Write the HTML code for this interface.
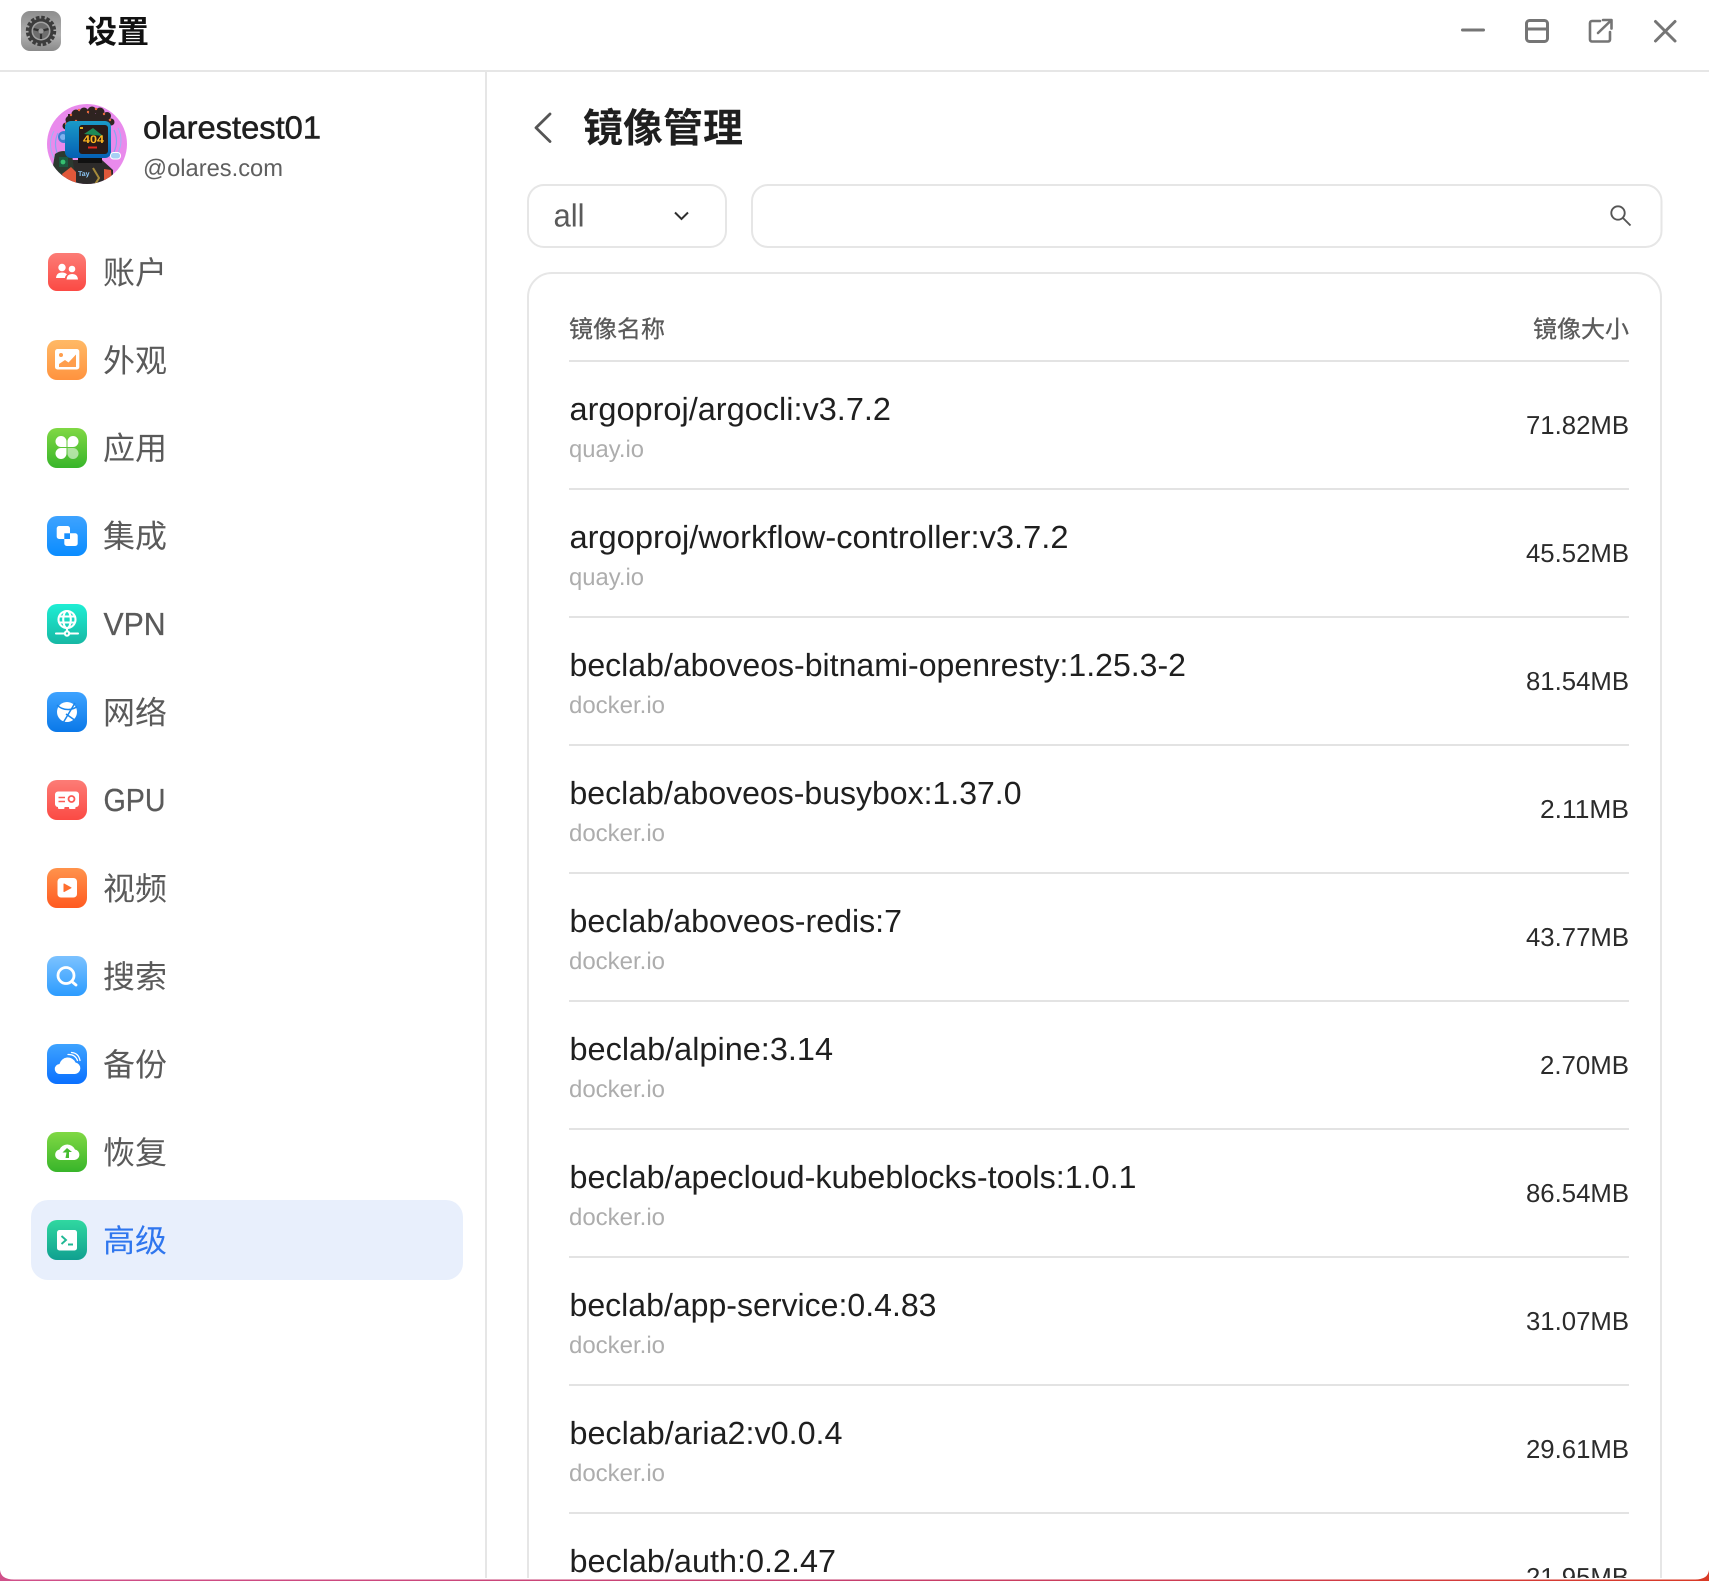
<!DOCTYPE html>
<html lang="zh">
<head>
<meta charset="utf-8">
<title>设置</title>
<style>
html,body{margin:0;padding:0;background:#fff;width:1709px;height:1581px;overflow:hidden}
svg{display:block}
text{font-family:"Liberation Sans","Noto Sans CJK SC",sans-serif;text-rendering:geometricPrecision}
.n{font-size:32px;fill:#1f1f1f}
.s{font-size:24px;fill:#adadad}
.z{font-size:26px;fill:#2b2b2b;text-anchor:end}
.l{font-size:32px;fill:#5a5a5a}
.h{font-size:24px;fill:#5a5a5a;stroke:#5a5a5a;stroke-width:.3}
.w{fill:none;stroke:#757575;stroke-width:3;stroke-linecap:round;stroke-linejoin:round}
</style>
</head>
<body>
<svg width="1709" height="1581" viewBox="0 0 1709 1581" xmlns="http://www.w3.org/2000/svg">
<defs>
<linearGradient id="gRed" x1="0" y1="0" x2="0" y2="1"><stop offset="0" stop-color="#fc7c76"/><stop offset="1" stop-color="#fb4a44"/></linearGradient>
<linearGradient id="gOrg" x1="0" y1="0" x2="0" y2="1"><stop offset="0" stop-color="#ffb966"/><stop offset="1" stop-color="#ff933f"/></linearGradient>
<linearGradient id="gGrn" x1="0" y1="0" x2="0" y2="1"><stop offset="0" stop-color="#80d844"/><stop offset="1" stop-color="#38b52a"/></linearGradient>
<linearGradient id="gBlu" x1="0" y1="0" x2="0" y2="1"><stop offset="0" stop-color="#3ea3ff"/><stop offset="1" stop-color="#0a8cff"/></linearGradient>
<linearGradient id="gTea" x1="0" y1="0" x2="0" y2="1"><stop offset="0" stop-color="#1eeed4"/><stop offset="1" stop-color="#17b8a4"/></linearGradient>
<linearGradient id="gNet" x1="0" y1="0" x2="0" y2="1"><stop offset="0" stop-color="#3ea3ff"/><stop offset="1" stop-color="#0a78e8"/></linearGradient>
<linearGradient id="gVid" x1="0" y1="0" x2="0" y2="1"><stop offset="0" stop-color="#ff934c"/><stop offset="1" stop-color="#ff5a20"/></linearGradient>
<linearGradient id="gSea" x1="0" y1="0" x2="0" y2="1"><stop offset="0" stop-color="#7cc2ff"/><stop offset="1" stop-color="#2c9cff"/></linearGradient>
<linearGradient id="gBak" x1="0" y1="0" x2="0" y2="1"><stop offset="0" stop-color="#3ea3ff"/><stop offset="1" stop-color="#0a70ff"/></linearGradient>
<linearGradient id="gAdv" x1="0" y1="0" x2="0" y2="1"><stop offset="0" stop-color="#30d8a0"/><stop offset="1" stop-color="#10a090"/></linearGradient>
<linearGradient id="gApp" x1="0" y1="0" x2="0" y2="1"><stop offset="0" stop-color="#8e8e8e"/><stop offset=".6" stop-color="#b0b0b0"/><stop offset="1" stop-color="#8a8a8a"/></linearGradient>
<linearGradient id="gHead" x1="0" y1="0" x2="0" y2="1"><stop offset="0" stop-color="#1a9ac8"/><stop offset="1" stop-color="#0560b4"/></linearGradient>
<linearGradient id="gBand" x1="0" y1="0" x2="1" y2="0"><stop offset="0" stop-color="#d0508a"/><stop offset=".5" stop-color="#c63f6e"/><stop offset="1" stop-color="#d93a26"/></linearGradient>
<clipPath id="cAv"><circle cx="87" cy="144" r="40"/></clipPath>
</defs>

<rect width="1709" height="1581" fill="#fff"/>

<!-- title bar -->
<rect x="21" y="11" width="40" height="40" rx="9" fill="url(#gApp)"/>
<circle cx="41" cy="31" r="13.5" fill="none" stroke="#3c3c3c" stroke-width="3.4" stroke-dasharray="3.500 1.800"/>
<circle cx="41" cy="31" r="12.500" fill="#3c3c3c"/>
<circle cx="41" cy="31" r="9.500" fill="#a2a2a2"/>
<circle cx="41" cy="31" r="8" fill="#6e6e6e"/>
<path d="M41 31 L33.500 29 M41 31 L48.500 29 M41 31 L41 39" stroke="#323232" stroke-width="2.200"/>
<circle cx="41" cy="31" r="2.600" fill="#9c9c9c"/>
<text x="85" y="43" font-size="32" font-weight="700" fill="#111">设置</text>
<path class="w" d="M1462.5 30 H1483.5"/>
<rect class="w" x="1526.5" y="20.5" width="21" height="21" rx="3"/>
<path class="w" d="M1527 29 H1547"/>
<path class="w" style="stroke-width:2.6" d="M1600 21 H1592 a2 2 0 0 0 -2 2 V39.500 a2 2 0 0 0 2 2 H1608 a2 2 0 0 0 2 -2 V32 M1598 33 L1611 20.500 M1603 20 H1611.500 V28.500"/>
<path class="w" d="M1655.500 21.500 L1675 41 M1675 21.500 L1655.500 41"/>
<rect x="0" y="70" width="1709" height="2" fill="#e6e6e6"/>
<rect x="485" y="72" width="2" height="1508" fill="#e6e6e6"/>

<!-- avatar -->
<circle cx="87" cy="144" r="40" fill="#e98aec"/>
<g clip-path="url(#cAv)">
<path d="M58 133 q-5 11 0 22 M114 130 q5 11 0 22" fill="none" stroke="#8aa4f0" stroke-width="1.2"/>
<path d="M54 131 q-7 13 0 27 M118 128 q6 12 0 25" fill="none" stroke="#9cb4f4" stroke-width="1"/>
<path d="M72 160 H102 L113 170 V190 H66 V170 Z" fill="#2d2b2a"/>
<rect x="78" y="154" width="24" height="9" fill="#111"/>
<path d="M55 154 q8 -6 17 0 l2 15 l-10 8 l-12 -6 Z" fill="#2c3a30"/>
<rect x="59" y="157" width="9" height="10" fill="#1c5a40"/>
<circle cx="63" cy="162" r="2.400" fill="#36c070"/>
<path d="M62 174 l9 -7 l5 5 l0 14 l-10 0 Z" fill="#e0583a"/>
<path d="M104 169 l7 1 l1 12 l-8 1 Z" fill="#e0583a"/>
<path d="M93 168 l6 10 l-5 8" fill="none" stroke="#a68a3a" stroke-width="2"/>
<text x="78" y="176" font-size="7" font-weight="700" fill="#8cc6f6">Tay</text>
<g fill="#2e2320">
<circle cx="70" cy="120" r="4.500"/><circle cx="76" cy="114" r="4.500"/><circle cx="84" cy="112" r="4.500"/><circle cx="92" cy="111" r="4.500"/><circle cx="100" cy="112" r="4.500"/><circle cx="107" cy="116" r="4"/><circle cx="111" cy="122" r="3.500"/><circle cx="66" cy="126" r="3.500"/><rect x="68" y="114" width="40" height="12"/>
</g>
<g fill="#e8693a">
<circle cx="71" cy="115" r="1.200"/><circle cx="79" cy="110" r="1.200"/><circle cx="88" cy="112" r="1.200"/><circle cx="96" cy="109" r="1.200"/><circle cx="104" cy="114" r="1.200"/><circle cx="110" cy="120" r="1.200"/><circle cx="76" cy="121" r="1.200"/><circle cx="66" cy="124" r="1.200"/>
</g>
<circle cx="64" cy="137" r="6" fill="#3a7ed0"/>
<circle cx="63" cy="137" r="3" fill="#7fb2ee"/>
<rect x="65" y="121" width="46" height="37" rx="6" fill="url(#gHead)"/>
<rect x="79" y="125" width="29" height="29" rx="3" fill="#281a18"/>
<path d="M84 134 L93 128 L103 136 Z" fill="#1e8a58"/>
<text x="83" y="143" font-size="11" font-weight="700" fill="#ffb820" textLength="21" lengthAdjust="spacingAndGlyphs">404</text>
<rect x="88" y="146.500" width="9" height="2" fill="#e02a20"/>
<rect x="80" y="127" width="3" height="2" fill="#e0b020"/>
</g>
<rect x="110.500" y="152.500" width="10" height="6.500" rx="3" fill="#a8d0f4" stroke="#fff" stroke-width="1"/>

<text x="143" y="138.500" font-size="32" fill="#1f1f1f" stroke="#1f1f1f" stroke-width=".55" textLength="178" lengthAdjust="spacingAndGlyphs">olarestest01</text>
<text x="143" y="176" font-size="24" fill="#5f5f5f" textLength="140" lengthAdjust="spacingAndGlyphs">@olares.com</text>

<!-- active bg -->
<rect x="31" y="1200" width="432" height="80" rx="17" fill="#e8effc"/>

<!-- 账户 -->
<rect x="48" y="253" width="38" height="38" rx="9" fill="url(#gRed)"/>
<circle cx="62" cy="267.500" r="3.700" fill="#fff"/><circle cx="72" cy="269" r="3.300" fill="#fff"/>
<path d="M56 278 q0.500 -5.500 6 -5.500 q3.500 0 5 2 q-2 1.500 -2 3.500 Z M66.500 279.500 q0.500 -5.500 5.500 -5.500 q5.500 0 6 5.500 Z" fill="#fff"/>
<text class="l" x="103" y="284">账户</text>
<!-- 外观 -->
<rect x="47" y="340" width="40" height="40" rx="10" fill="url(#gOrg)"/>
<rect x="55" y="349" width="24.300" height="20.500" rx="2.500" fill="#fff"/>
<circle cx="61" cy="355" r="2" fill="#ff9e4c"/>
<path d="M59 367 V364 L65 360 L68.500 362.500 L76 354.500 V367 Z" fill="#ff9e4c"/>
<text class="l" x="103" y="372">外观</text>
<!-- 应用 -->
<rect x="47" y="428" width="40" height="40" rx="10" fill="url(#gGrn)"/>
<path d="M66.500 447 H61 a5.500 5.500 0 1 1 5.500 -5.500 Z M67.500 447 V441.500 a5.500 5.500 0 1 1 5.500 5.500 Z M66.500 448 V453.500 a5.500 5.500 0 1 1 -5.500 -5.500 Z" fill="#fff"/>
<path d="M67.500 448 H73 a5.500 5.500 0 1 1 -5.500 5.500 Z" fill="#fff" fill-opacity=".55"/>
<text class="l" x="103" y="459.500">应用</text>
<!-- 集成 -->
<rect x="47" y="516" width="40" height="40" rx="10" fill="url(#gBlu)"/>
<rect x="56.700" y="526" width="13.300" height="13" rx="2.500" fill="#fff"/>
<rect x="64.300" y="533.300" width="13.400" height="12.700" rx="2.500" fill="#fff"/>
<rect x="64.300" y="533.300" width="5.700" height="5.700" fill="#1790ff"/>
<text class="l" x="103" y="547.500">集成</text>
<!-- VPN -->
<rect x="47" y="604" width="40" height="40" rx="10" fill="url(#gTea)"/>
<g fill="none" stroke="#fff" stroke-width="2.100">
<circle cx="67" cy="619.500" r="8.500"/>
<ellipse cx="67" cy="619.500" rx="3.800" ry="8.500"/>
<path d="M59 616.500 H75 M59 622.500 H75 M67 628 V631"/>
<path d="M56 633.500 H64.500 M69.500 633.500 H78" stroke-linecap="round"/>
<circle cx="67" cy="633.500" r="2.200"/>
</g>
<text x="103.500" y="635" class="l" stroke="#5a5a5a" stroke-width=".3" textLength="62" lengthAdjust="spacingAndGlyphs">VPN</text>
<!-- 网络 -->
<rect x="47" y="692" width="40" height="40" rx="10" fill="url(#gNet)"/>
<circle cx="67" cy="712" r="10" fill="#fff"/>
<path d="M57 705 q5 5 12 4.500 q5 -0.500 8 -3 M75 703 L63 723 M66 714 L76 721" fill="none" stroke="#1a86ec" stroke-width="1.500"/>
<text class="l" x="103" y="724">网络</text>
<!-- GPU -->
<rect x="47" y="780" width="40" height="40" rx="10" fill="url(#gRed)"/>
<rect x="55" y="791.500" width="24" height="15.500" rx="3" fill="#fff"/>
<rect x="58" y="806" width="6.500" height="3" rx="1" fill="#fff"/><rect x="69" y="806" width="6.500" height="3" rx="1" fill="#fff"/>
<circle cx="71.500" cy="799" r="3" fill="none" stroke="#fb5a54" stroke-width="1.800"/>
<path d="M58.500 797.500 H65 M58.500 801.500 H65" stroke="#fb5a54" stroke-width="1.600"/>
<text x="103.500" y="811" class="l" stroke="#5a5a5a" stroke-width=".3" textLength="62" lengthAdjust="spacingAndGlyphs">GPU</text>
<!-- 视频 -->
<rect x="47" y="868" width="40" height="40" rx="10" fill="url(#gVid)"/>
<rect x="57.500" y="878" width="19.500" height="19.500" rx="3.500" fill="#fff"/>
<path d="M64 884 L71 887.800 L64 891.500 Z" fill="#ff6e2e" stroke="#ff6e2e" stroke-width="1" stroke-linejoin="round"/>
<text class="l" x="103" y="900">视频</text>
<!-- 搜索 -->
<rect x="47" y="956" width="40" height="40" rx="10" fill="url(#gSea)"/>
<circle cx="66" cy="975.500" r="8" fill="none" stroke="#fff" stroke-width="2.800"/>
<path d="M73 982.500 L76 985" stroke="#fff" stroke-width="2.800" stroke-linecap="round"/>
<text class="l" x="103" y="988">搜索</text>
<!-- 备份 -->
<rect x="47" y="1044" width="40" height="40" rx="10" fill="url(#gBak)"/>
<path d="M60 1074 a5 5 0 0 1 -0.500 -10 a8.500 8.500 0 0 1 16 -1.500 a5.800 5.800 0 0 1 -0.500 11.500 Z" fill="#fff"/>
<path d="M68 1054.500 q7 -0.500 9.500 6 M71.500 1052.500 q7 0.500 8.500 8" fill="none" stroke="#fff" stroke-width="1.300" stroke-linecap="round"/>
<text class="l" x="103" y="1076">备份</text>
<!-- 恢复 -->
<rect x="47" y="1132" width="40" height="40" rx="10" fill="url(#gGrn)"/>
<path d="M60 1160 a5.300 5.300 0 0 1 -0.500 -10.500 a8.500 8.500 0 0 1 15.500 0 a5.300 5.300 0 0 1 -0.500 10.500 Z" fill="#fff"/>
<path d="M67 1148 L72 1152 H69 V1158 H65.500 L66.500 1152.500 H62.500 Z" fill="#46bd30"/>
<text class="l" x="103" y="1164">恢复</text>
<!-- 高级 -->
<rect x="47" y="1220" width="40" height="40" rx="10" fill="url(#gAdv)"/>
<rect x="57" y="1230" width="20" height="20.500" rx="2.500" fill="#fff"/>
<path d="M61.500 1236 L66 1240 L61.500 1244 M68 1244.500 H73" fill="none" stroke="#20b894" stroke-width="1.900"/>
<text x="103" y="1252" font-size="32" fill="#2f76ee">高级</text>

<!-- header -->
<path d="M550 114 L536 127.800 L550 141.500" fill="none" stroke="#555" stroke-width="2.800" stroke-linecap="round" stroke-linejoin="round"/>
<text x="583" y="142" font-size="40" font-weight="700" fill="#1f1f1f">镜像管理</text>

<!-- filter -->
<rect x="528" y="185" width="198" height="62" rx="16" fill="#fff" stroke="#e6e6e6" stroke-width="2"/>
<text x="553.500" y="226.500" font-size="32" fill="#5a5a5a" textLength="31" lengthAdjust="spacingAndGlyphs">all</text>
<path d="M675 212.500 L681.500 219 L688 212.500" fill="none" stroke="#2f2f2f" stroke-width="2"/>
<rect x="752" y="185" width="909.500" height="62" rx="16" fill="#fff" stroke="#e6e6e6" stroke-width="2"/>
<circle cx="1618" cy="213" r="6.700" fill="none" stroke="#555" stroke-width="1.900"/>
<path d="M1623 218 L1630.500 225.500" stroke="#555" stroke-width="1.900"/>

<!-- card -->
<path d="M528 1590 V297 a24 24 0 0 1 24 -24 H1637 a24 24 0 0 1 24 24 V1590" fill="#fff" stroke="#e6e6e6" stroke-width="2"/>
<text x="569" y="337.500" class="h">镜像名称</text>
<text x="1533" y="337.500" class="h">镜像大小</text>
<g fill="#e3e3e3">
<rect x="569" y="360" width="1060" height="2"/>
<rect x="569" y="488" width="1060" height="2"/>
<rect x="569" y="616" width="1060" height="2"/>
<rect x="569" y="744" width="1060" height="2"/>
<rect x="569" y="872" width="1060" height="2"/>
<rect x="569" y="1000" width="1060" height="2"/>
<rect x="569" y="1128" width="1060" height="2"/>
<rect x="569" y="1256" width="1060" height="2"/>
<rect x="569" y="1384" width="1060" height="2"/>
<rect x="569" y="1512" width="1060" height="2"/>
</g>

<text class="n" x="569.500" y="420" textLength="321.500" lengthAdjust="spacingAndGlyphs">argoproj/argocli:v3.7.2</text>
<text class="s" x="569" y="457" textLength="75" lengthAdjust="spacingAndGlyphs">quay.io</text>
<text class="z" x="1629" y="434" textLength="103" lengthAdjust="spacingAndGlyphs">71.82MB</text>

<text class="n" x="569.500" y="548" textLength="499" lengthAdjust="spacingAndGlyphs">argoproj/workflow-controller:v3.7.2</text>
<text class="s" x="569" y="585" textLength="75" lengthAdjust="spacingAndGlyphs">quay.io</text>
<text class="z" x="1629" y="562" textLength="103" lengthAdjust="spacingAndGlyphs">45.52MB</text>

<text class="n" x="569.500" y="676" textLength="616.500" lengthAdjust="spacingAndGlyphs">beclab/aboveos-bitnami-openresty:1.25.3-2</text>
<text class="s" x="569" y="713" textLength="96" lengthAdjust="spacingAndGlyphs">docker.io</text>
<text class="z" x="1629" y="690" textLength="103" lengthAdjust="spacingAndGlyphs">81.54MB</text>

<text class="n" x="569.500" y="804" textLength="452" lengthAdjust="spacingAndGlyphs">beclab/aboveos-busybox:1.37.0</text>
<text class="s" x="569" y="841" textLength="96" lengthAdjust="spacingAndGlyphs">docker.io</text>
<text class="z" x="1629" y="818" textLength="89" lengthAdjust="spacingAndGlyphs">2.11MB</text>

<text class="n" x="569.500" y="932" textLength="332.500" lengthAdjust="spacingAndGlyphs">beclab/aboveos-redis:7</text>
<text class="s" x="569" y="969" textLength="96" lengthAdjust="spacingAndGlyphs">docker.io</text>
<text class="z" x="1629" y="946" textLength="103" lengthAdjust="spacingAndGlyphs">43.77MB</text>

<text class="n" x="569.500" y="1060" textLength="263.500" lengthAdjust="spacingAndGlyphs">beclab/alpine:3.14</text>
<text class="s" x="569" y="1097" textLength="96" lengthAdjust="spacingAndGlyphs">docker.io</text>
<text class="z" x="1629" y="1074" textLength="89" lengthAdjust="spacingAndGlyphs">2.70MB</text>

<text class="n" x="569.500" y="1188" textLength="567" lengthAdjust="spacingAndGlyphs">beclab/apecloud-kubeblocks-tools:1.0.1</text>
<text class="s" x="569" y="1225" textLength="96" lengthAdjust="spacingAndGlyphs">docker.io</text>
<text class="z" x="1629" y="1202" textLength="103" lengthAdjust="spacingAndGlyphs">86.54MB</text>

<text class="n" x="569.500" y="1316" textLength="367" lengthAdjust="spacingAndGlyphs">beclab/app-service:0.4.83</text>
<text class="s" x="569" y="1353" textLength="96" lengthAdjust="spacingAndGlyphs">docker.io</text>
<text class="z" x="1629" y="1330" textLength="103" lengthAdjust="spacingAndGlyphs">31.07MB</text>

<text class="n" x="569.500" y="1444" textLength="273" lengthAdjust="spacingAndGlyphs">beclab/aria2:v0.0.4</text>
<text class="s" x="569" y="1481" textLength="96" lengthAdjust="spacingAndGlyphs">docker.io</text>
<text class="z" x="1629" y="1458" textLength="103" lengthAdjust="spacingAndGlyphs">29.61MB</text>

<text class="n" x="569.500" y="1572" textLength="266.500" lengthAdjust="spacingAndGlyphs">beclab/auth:0.2.47</text>
<text class="z" x="1629" y="1586" textLength="103" lengthAdjust="spacingAndGlyphs">21.95MB</text>

<!-- bottom edge -->
<rect x="0" y="1578" width="1709" height="3" fill="#fff"/>
<path d="M0 1570 Q1 1579.500 14 1579.500 H1695 Q1708 1579.500 1709 1570 V1581 H0 Z" fill="url(#gBand)"/>
</svg>
</body>
</html>
